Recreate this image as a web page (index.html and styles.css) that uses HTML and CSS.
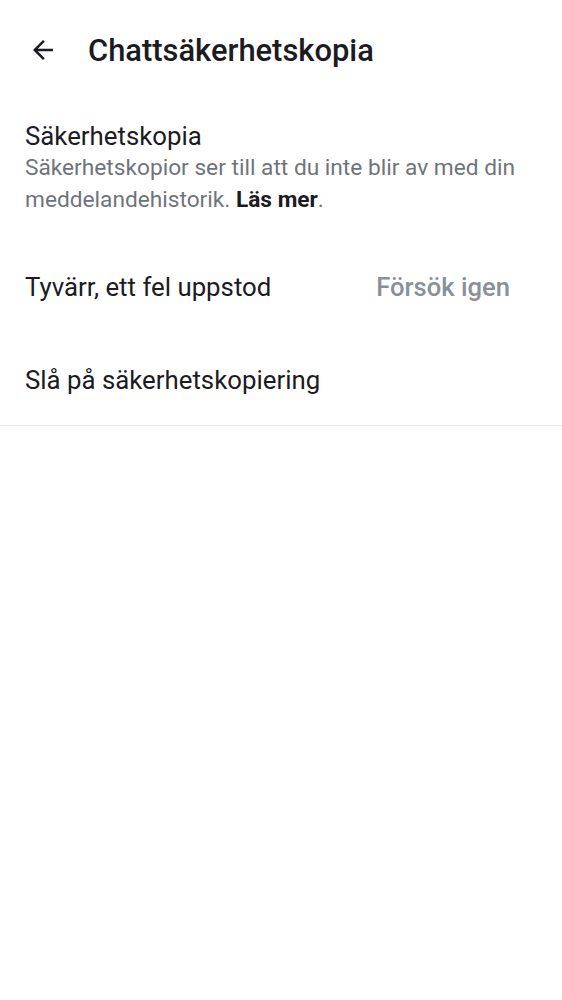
FILE: index.html
```html
<!DOCTYPE html>
<html lang="sv">
<head>
<meta charset="utf-8">
<link rel="stylesheet" href="styles.css">
</head>
<body>
<header class="topbar">
  <button class="back" aria-label="Tillbaka">
    <svg width="30" height="30" viewBox="0 0 24 24"><path d="M20 11H7.83l5.59-5.59L12 4l-8 8 8 8 1.41-1.41L7.83 13H20v-2z" fill="#1c1b1f"/></svg>
  </button>
  <h1 class="title">Chattsäkerhetskopia</h1>
</header>
<section class="intro">
  <div class="intro-title">Säkerhetskopia</div>
  <p class="intro-text">Säkerhetskopior ser till att du inte blir av med din meddelandehistorik. <b>Läs mer</b>.</p>
</section>
<div class="row error-row">
  <span class="row-text">Tyvärr, ett fel uppstod</span>
  <span class="retry">Försök igen</span>
</div>
<div class="row enable-row">
  <span class="row-text">Slå på säkerhetskopiering</span>
</div>
</body>
</html>
```
FILE: styles.css
```css
html, body { margin: 0; padding: 0; background: #fff; }
body { font-family: Roboto, "Noto Sans", sans-serif; color: #1c1b1f; width: 562px; }
.topbar { display: flex; align-items: center; height: 100px; padding-left: 28px; }
.back { background: none; border: 0; padding: 0; width: 30px; height: 30px; display: flex; }
.title { margin: 0 0 0 30px; font-size: 30.9px; font-weight: 500; color: #1c1b1f; }
.intro { padding: 21px 25px 0; }
.intro-title { font-size: 25.8px; line-height: 31px; }
.intro-text { margin: 0; font-size: 22.7px; line-height: 32px; color: #6f747c; }
.intro-text b { color: #1c1b1f; font-weight: 700; }
.row { display: flex; align-items: center; justify-content: space-between; padding: 0 52px 0 25px; }
.row-text { font-size: 25.8px; }
.error-row { height: 94px; margin-top: 24px; }
.retry { font-size: 25.6px; font-weight: 500; color: #8a9099; }
.enable-row { height: 91px; border-bottom: 1px solid #e9e9ee; }
```
